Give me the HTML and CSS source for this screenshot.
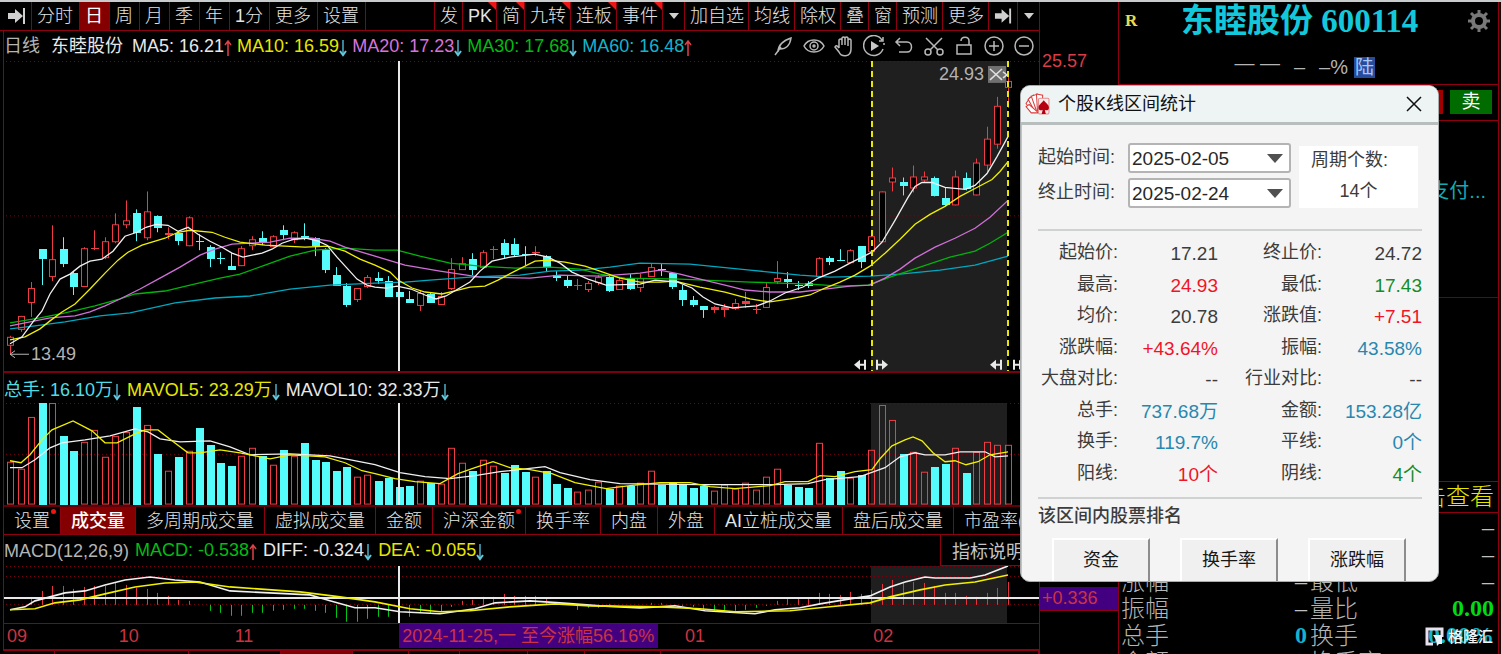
FILE: index.html
```html
<!DOCTYPE html>
<html lang="zh-CN">
<head>
<meta charset="utf-8">
<title>东睦股份 600114</title>
<link rel="stylesheet" href="styles.css">
</head>
<body>
<div class="app">
  <main class="chart-col">
    <nav class="toolbar">
      <div class="tools tools-left">
        <button class="tool" aria-label="展开"><svg class="ico-end" viewBox="0 0 20 18"><path d="M1 6h7V2l8 7-8 7v-4H1zM16 1h2v16h-2z"/></svg></button>
        <button class="tool">分时</button><button class="tool active">日</button><button class="tool">周</button><button class="tool">月</button><button class="tool">季</button><button class="tool">年</button><button class="tool">1分</button><button class="tool">更多</button><button class="tool">设置</button>
      </div>
      <div class="tools tools-right">
        <button class="tool">发</button><button class="tool flag">PK</button><button class="tool flag">简</button><button class="tool flag">九转</button><button class="tool flag">连板</button><button class="tool flag">事件</button><button class="tool caret" aria-label="事件菜单"></button><button class="tool">加自选</button><button class="tool">均线</button><button class="tool">除权</button><button class="tool">叠</button><button class="tool">窗</button><button class="tool">预测</button><button class="tool">更多</button><button class="tool" aria-label="收起"><svg class="ico-end" viewBox="0 0 20 18"><path d="M1 6h7V2l8 7-8 7v-4H1zM16 1h2v16h-2z"/></svg></button><button class="tool caret" aria-label="更多菜单"></button>
      </div>
    </nav>

    <div class="panes">
      <div class="info">
        <span class="gray">日线</span><span class="white name">东睦股份</span>
        <span class="white">MA5: 16.21<svg class="arr up"><use href="#up"/></svg></span>
        <span class="yellow">MA10: 16.59<svg class="arr down"><use href="#down"/></svg></span>
        <span class="magenta">MA20: 17.23<svg class="arr down"><use href="#down"/></svg></span>
        <span class="green">MA30: 17.68<svg class="arr down"><use href="#down"/></svg></span>
        <span class="cyan">MA60: 16.48<svg class="arr up"><use href="#up"/></svg></span>
        <div class="draw">
          <button aria-label="画线"><svg viewBox="0 0 22 22"><path d="M2 20l6-8M5 17c0-7 4-11 13-14-1 7-4 11-11 11"/></svg></button>
          <button aria-label="显示"><svg viewBox="0 0 22 22"><path d="M1 11c4-8 16-8 20 0-4 8-16 8-20 0z"/><circle cx="11" cy="11" r="4"/><circle cx="11" cy="11" r="1"/></svg></button>
          <button aria-label="拖动"><svg viewBox="0 0 22 22"><path d="M6 13V5q1.500-2 3 0v5V3q1.500-2 3 0v7V3q1.500-2 3 0v8V5q2-2 3 0v9c0 9-10 8-12 3L2 12q1-3 4 1"/></svg></button>
          <button aria-label="回放"><svg viewBox="0 0 22 22"><path d="M19 5a10 10 0 1 0 1 9M20 2v4h-4M21 8v2"/><path class="solid" d="M8 6l8 5-8 5z"/></svg></button>
          <button aria-label="撤销"><svg viewBox="0 0 22 22"><path d="M7 3L3 7l4 4M3 7h11c6 0 6 10 0 10H6"/></svg></button>
          <button aria-label="剪切"><svg viewBox="0 0 22 22"><path d="M3 3l12 12M19 3L7 15"/><circle cx="5" cy="17" r="3"/><circle cx="17" cy="17" r="3"/></svg></button>
          <button aria-label="解锁"><svg viewBox="0 0 22 22"><path d="M4 10h14v9H4zM8 6c0-5 8-5 8 0v4"/></svg></button>
          <button aria-label="放大"><svg viewBox="0 0 22 22"><circle cx="11" cy="11" r="9"/><path d="M6 11h10M11 6v10"/></svg></button>
          <button aria-label="缩小"><svg viewBox="0 0 22 22"><circle cx="11" cy="11" r="9"/><path d="M6 11h10"/></svg></button>
        </div>
      </div>
      <svg id="price" class="plot price" viewBox="4 61 1035 311" preserveAspectRatio="none"></svg>

      <div class="info vol-info">
        <span class="aqua">总手: 16.10万<svg class="arr down"><use href="#down"/></svg></span>
        <span class="yellow">MAVOL5: 23.29万<svg class="arr down"><use href="#down"/></svg></span>
        <span class="white">MAVOL10: 32.33万<svg class="arr down"><use href="#down"/></svg></span>
      </div>
      <svg id="volume" class="plot volume" viewBox="4 403 1035 103" preserveAspectRatio="none"></svg>

      <nav class="tabs">
        <button class="dot">设置</button><button class="active">成交量</button><button>多周期成交量</button><button>虚拟成交量</button><button>金额</button><button class="dot">沪深金额</button><button>换手率</button><button>内盘</button><button>外盘</button><button>AI立桩成交量</button><button>盘后成交量</button><button>市盈率(动)</button>
      </nav>

      <div class="info macd-info">
        <span class="gray">MACD(12,26,9)</span>
        <span class="green">MACD: -0.538<svg class="arr up"><use href="#up"/></svg></span>
        <span class="white">DIFF: -0.324<svg class="arr down"><use href="#down"/></svg></span>
        <span class="yellow">DEA: -0.055<svg class="arr down"><use href="#down"/></svg></span>
        <button class="explain">指标说明</button>
      </div>
      <svg id="macd" class="plot macd" viewBox="4 567 1035 57" preserveAspectRatio="none"></svg>

      <div class="axis">
        <span style="left:0%">09</span><span style="left:10.8%">10</span><span style="left:22%">11</span>
        <span class="cursor-date" style="left:38.2%">2024-11-25,一 至今涨幅56.16%</span>
        <span style="left:65.500%">01</span><span style="left:83.700%">02</span>
      </div>
    </div>
    <div class="next-tabs"><button>设置</button><i></i><i></i><i class="on"></i><i></i><i></i><i></i><i></i><i></i><i></i></div>
  </main>

  <aside class="scale">
    <span class="top-price">25.57</span>
    <span class="cursor-value">+0.336</span>
  </aside>

  <section class="quote">
    <header>
      <b class="tag">R</b>
      <h1>东睦股份 600114</h1>
      <button class="gear" aria-label="设置"><svg viewBox="0 0 22 22"><circle cx="11" cy="11" r="6" class="ring"/><path d="M11 0v5M11 17v5M0 11h5M17 11h5M3 3l4 4M15 15l4 4M19 3l-4 4M3 19l4-4" class="teeth"/></svg></button>
    </header>
    <div class="last"><span class="hi">— —</span><span>–</span><span>–%</span><mark>陆</mark></div>
    <div class="trade"><button class="buy">买</button><button class="sell">卖</button></div>
    <div class="news"><a href="#">支付...</a></div>
    <div class="blank"></div>
    <div class="view"><a href="#">点击查看</a></div>
    <dl class="figures">
      <dt></dt><dd></dd><dt></dt><dd>–</dd>
      <dt></dt><dd></dd><dt></dt><dd>–</dd>
      <dt>涨幅</dt><dd>–</dd><dt>最低</dt><dd>–</dd>
      <dt>振幅</dt><dd>–</dd><dt>量比</dt><dd class="lime">0.00</dd>
      <dt>总手</dt><dd class="sky">0</dd><dt>换手</dt><dd class="sky">0.00%</dd>
      <dt>金额</dt><dd></dd><dt>换手率</dt><dd></dd>
    </dl>
    <div class="brand"><svg viewBox="0 0 20 20"><path d="M8 17H2V2h15v8" class="b1"/><path d="M8 8h9v9h-3l-2 2-1-6z" class="b2"/></svg>格隆汇</div>
  </section>
  <div class="edge"></div>
</div>

<div class="dialog" role="dialog" aria-labelledby="dlg-title">
  <header>
    <svg class="cards" viewBox="0 0 24 21"><g class="fan"><path d="M1 10l4-6 8 12-6 2z"/><path d="M3 6l5-4 6 14-5 1z"/><path d="M6 3l6-2 3 15-4 1z"/><path d="M11 1l6 1-1 14-4 1z"/><path d="M1 13l3-2 9 8H6z"/></g><rect x="13" y="5" width="10" height="15" rx="1" class="face"/><path d="M18 7c2 3 5 4 5 7 0 3-3 3-4 2l1 4h-4l1-4c-1 1-4 1-4-2 0-3 3-4 5-7z" class="spade"/></svg>
    <h2 id="dlg-title">个股K线区间统计</h2>
    <button class="close" aria-label="关闭"><svg viewBox="0 0 16 16"><path d="M1 1l14 14M15 1L1 15"/></svg></button>
  </header>
  <div class="body">
    <div class="period">
      <div class="dates">
        <label for="from">起始时间:</label><div class="pick"><select id="from"><option>2025-02-05</option></select></div>
        <label for="to">终止时间:</label><div class="pick"><select id="to"><option>2025-02-24</option></select></div>
      </div>
      <div class="count"><span>周期个数:</span><b>14个</b></div>
    </div>
    <dl class="stats">
      <dt>起始价:</dt><dd>17.21</dd><dt>终止价:</dt><dd>24.72</dd>
      <dt>最高:</dt><dd class="up">24.93</dd><dt>最低:</dt><dd class="down">17.43</dd>
      <dt>均价:</dt><dd>20.78</dd><dt>涨跌值:</dt><dd class="up">+7.51</dd>
      <dt>涨跌幅:</dt><dd class="up">+43.64%</dd><dt>振幅:</dt><dd class="blue">43.58%</dd>
      <dt>大盘对比:</dt><dd>--</dd><dt>行业对比:</dt><dd>--</dd>
      <dt>总手:</dt><dd class="blue">737.68万</dd><dt>金额:</dt><dd class="blue">153.28亿</dd>
      <dt>换手:</dt><dd class="blue">119.7%</dd><dt>平线:</dt><dd class="blue">0个</dd>
      <dt>阳线:</dt><dd class="up">10个</dd><dt>阴线:</dt><dd class="down">4个</dd>
    </dl>
    <h3>该区间内股票排名</h3>
    <div class="rank"><button>资金</button><button>换手率</button><button>涨跌幅</button></div>
  </div>
</div>

<svg class="defs" aria-hidden="true">
  <symbol id="up" viewBox="0 0 8 18"><path d="M4 17V2M1 6l3-4 3 4" fill="none" stroke="#e04048" stroke-width="1.500"/></symbol>
  <symbol id="down" viewBox="0 0 8 18"><path d="M4 1v14" stroke="#3a8296" stroke-width="2"/><path d="M1 12l3 4 3-4" fill="none" stroke="#64c8dc" stroke-width="2"/></symbol>
</svg>
<script src="chart.js"></script>
</body>
</html>
```

FILE: styles.css
```css
* { box-sizing: border-box; }
:root { --line: #8c0012; --sans: "Liberation Sans", "Noto Sans CJK SC", sans-serif; }
body { margin: 0; background: #000; font-family: var(--sans); color: #c4c4c4; overflow: hidden; }
button { font: inherit; color: inherit; background: none; border: 0; padding: 0; }
a { text-decoration: none; color: inherit; }
.defs { position: absolute; width: 0; height: 0; }

.app { display: grid; grid-template-columns: 1fr 79px 379px 3px; height: 100vh; min-height: 600px; border-top: 2px solid #c9cccc; }
.chart-col { display: flex; flex-direction: column; min-width: 0; min-height: 0; border-right: 1px solid var(--line); }

.toolbar { display: flex; justify-content: space-between; height: 29px; flex: none; border-bottom: 1px solid var(--line); font-size: 18px; line-height: 26px; font-weight: 300; color: #e4e4e4; }
.tools { display: flex; }
.tool { position: relative; padding: 0 4px 0 5px; border-left: 1px solid var(--line); white-space: nowrap; }
.tools-left .tool { padding: 0 6px 0 5px; }
.tools-left { border-right: 1px solid var(--line); }
.tools-left .tool:first-child { border-left: 0; padding: 0 4px 0 7px; }
.tool.active { background: #840000; color: #fff; font-weight: 400; }
.flag::after { content: ""; position: absolute; top: 0; right: 0; border: 4px solid; border-color: #f01414 #f01414 transparent transparent; }
.caret { width: 22px; display: flex; align-items: center; justify-content: center; }
.caret::before { content: ""; border: 5px solid transparent; border-top: 6px solid #d0d0d0; border-bottom: 0; }
.ico-end { width: 20px; height: 18px; display: block; fill: #d0d0d0; }
.tools-right .ico-end { width: 19px; }

.panes { flex: 1; min-height: 0; display: flex; flex-direction: column; margin-left: 3px; border-left: 1px solid var(--line); }
.info { display: flex; align-items: center; flex: none; height: 30px; font-size: 18px; gap: 5px; white-space: nowrap; }
.info .gray { color: #b4b4b4; }
.info .name { margin: 0 4px 0 6px; }
.info .gray, .name { line-height: 24px; }
.vol-info, .macd-info { gap: 6px; }
.macd-info { height: 31px; }
.white { color: #e8e8e8; } .yellow { color: #e6e600; } .magenta { color: #d873dc; } .green { color: #00bc14; } .cyan { color: #14b4cd; } .aqua { color: #50dce6; }
.arr { width: 8px; height: 18px; vertical-align: -5px; }
.draw { margin-left: auto; margin-right: 4px; display: flex; gap: 8px; }
.draw svg { display: block; width: 22px; height: 22px; fill: none; stroke: #b8b8b8; stroke-width: 1.5; }
.draw .solid { fill: #c8c8c8; stroke: none; }
.plot { display: block; width: 100%; height: 0; min-height: 0; }
.price { flex: 311; box-sizing: content-box; border-bottom: 2px solid #780010; }
.volume { flex: 103; }
.macd { flex: 57; }

.tabs { display: flex; flex: none; height: 30px; overflow: hidden; border-top: 2px solid #600008; border-bottom: 1px solid var(--line); font-size: 18px; line-height: 26px; font-weight: 300; color: #e4e4e4; white-space: nowrap; }
.tabs button { position: relative; flex: none; padding: 0 10px; border-right: 1px solid var(--line); }
.tabs .active { background: #840000; color: #fff; font-weight: 500; }
.dot::after { content: ""; position: absolute; top: 2px; right: 4px; width: 5px; height: 5px; border-radius: 50%; background: #f01414; }
.explain { margin-left: auto; align-self: stretch; width: 99px; padding-left: 11px; text-align: left; border-left: 1px solid var(--line); border-bottom: 1px solid var(--line); }

.axis { position: relative; flex: none; height: 26px; border-top: 1px solid var(--line); font-size: 18px; line-height: 24px; color: #cc3340; }
.axis span { position: absolute; top: 0; padding-left: 2px; white-space: nowrap; border-left: 1px solid transparent; }
.axis .cursor-date { background: #420080; padding-right: 4px; }
.next-tabs { display: grid; grid-template-columns: 52fr 134fr 92fr 72fr 56fr 51fr 67fr 57fr 76fr 378fr; flex: none; height: 5px; overflow: hidden; border-top: 2px solid var(--line); margin-left: 3px; font-size: 18px; line-height: 24px; }
.next-tabs button, .next-tabs i { border-right: 1px solid var(--line); height: 24px; }
.next-tabs .on { background: #840000; }

.scale { border-right: 1px solid var(--line); display: flex; flex-direction: column; font-size: 18px; color: #dc3c46; }
.top-price { margin: 49px 0 auto 2px; }
.cursor-value { background: #420080; color: #cc3340; line-height: 23px; padding-left: 2px; border-bottom: 1px solid var(--line); margin-bottom: 43px; }

.quote { position: relative; display: flex; flex-direction: column; min-height: 0; overflow: hidden; }
.quote header { display: flex; align-items: center; height: 38px; padding: 0 8px 0 6px; }
.tag { color: #e6dc50; font: bold 17px "Liberation Serif", serif; }
.quote h1 { flex: 1; margin: 0 6px 0 0; text-align: center; color: #14c8dc; font: 600 33px/38px "Liberation Serif", "Noto Sans CJK SC", serif; }
.gear { width: 22px; height: 22px; }
.gear svg { display: block; fill: none; stroke: #787878; }
.ring { stroke-width: 4; } .teeth { stroke-width: 3; }
.last { display: flex; align-items: center; justify-content: flex-end; gap: 14px; height: 45px; padding: 10px 123px 0 0; font-size: 20px; color: #b4b4b4; border-bottom: 1px solid var(--line); }
.last .hi { padding-bottom: 8px; }
.last mark { margin-left: -8px; background: #284c9c; color: #a8c8f8; font-size: 19px; line-height: 21px; width: 21px; text-align: center; }
.trade { display: flex; justify-content: flex-end; gap: 7px; padding: 5px 6px 6px; border-bottom: 1px solid var(--line); color: #fff; font-size: 19px; line-height: 24px; }
.trade button { width: 42px; }
.buy { background: #a00000; } .sell { background: #006c00; }
.news { flex: none; height: 177px; padding: 56px 12px 0 0; text-align: right; font-size: 20px; line-height: 28px; color: #14aab4; border-bottom: 1px solid #6e0010; }
.blank { flex: 1; }
.view { padding-right: 4px; text-align: right; font-size: 24px; line-height: 30px; color: #e6e600; border-top: 1px solid var(--line); border-bottom: 1px solid var(--line); font-weight: 300; }
.figures { flex: none; display: grid; grid-template-columns: 72px 114px 80px 1fr; grid-auto-rows: 27px; height: 141px; overflow: hidden; margin: 0; padding: 1px 4px 0 2px; font-size: 24px; line-height: 27px; font-weight: 300; color: #b4b4b4; }
.figures dt { white-space: nowrap; }
.figures dd { margin: 0; text-align: right; font-family: "Liberation Serif", serif; color: #c0c0c0; }
.figures dt:nth-of-type(even) { padding-left: 3px; }
.figures .lime { color: #00dc14; font-weight: bold; }
.figures .sky { color: #14b4cd; font-weight: bold; }
.brand { position: absolute; right: 5px; bottom: 6px; display: flex; align-items: center; gap: 3px; font-size: 15px; line-height: 22px; font-weight: 500; color: #f4f4f4; }
.brand svg { width: 20px; height: 20px; }
.b1 { fill: none; stroke: #e8e0ec; stroke-width: 3; } .b2 { fill: #e8f4fa; }
.edge { border-left: 1px solid var(--line); background: #180000; }

.dialog { position: absolute; top: 85px; right: 62px; width: 419px; overflow: hidden; background: #f4f4f4; border-radius: 10px; border: 1px solid #a8acac; color: #3c3c3c; font-size: 18px; }
.dialog header { display: flex; align-items: center; height: 39px; padding: 0 16px 0 4px; background: #eef3f3; border-bottom: 3px solid #b8bdbd; }
.cards { width: 25px; height: 22px; }
.fan path { fill: #fff; stroke: #dc3c3c; stroke-width: 1; }
.face { fill: #fde8e8; stroke: #e09090; stroke-width: 1; } .spade { fill: #b40010; }
.dialog h2 { flex: 1; margin: 0 0 0 8px; font-size: 18px; line-height: 26px; font-weight: 400; color: #101010; }
.close svg { display: block; width: 16px; height: 16px; stroke: #101010; stroke-width: 1.5; }
.body { padding: 18px 16px 0 16px; border-left: 1px solid #c0c4c4; }
.period { display: flex; justify-content: space-between; padding-bottom: 21px; border-bottom: 2px solid #d0d2d2; }
.dates { display: grid; grid-template-columns: 90px 163px; row-gap: 5px; line-height: 28px; }
.pick { position: relative; }
.pick select { width: 100%; height: 30px; padding: 0 2px; appearance: none; background: #fff; border: 2px solid #b4b4b4; border-radius: 3px; font: 19px var(--sans); color: #282828; }
.pick::after { content: ""; position: absolute; right: 8px; top: 11px; border: 8px solid transparent; border-top: 9px solid #505050; border-bottom: 0; pointer-events: none; }
.count { display: grid; margin: 3px 4px 0 0; padding: 1px 12px 0; width: 119px; height: 62px; background: #fff; line-height: 27px; white-space: nowrap; }
.count b { font-weight: 400; text-align: center; }
.stats { display: grid; grid-template-columns: 80px 1fr 104px 1fr; grid-auto-rows: 1fr; height: 268px; margin: 0; padding: 6px 0 8px; border-bottom: 2px solid #d0d2d2; line-height: 30px; }
.stats dt { text-align: right; white-space: nowrap; }
.stats dd { margin: 0; text-align: right; font-size: 19px; line-height: 26px; padding-top: 4px; }
.stats .up { color: #f01428; } .stats .down { color: #148c28; } .stats .blue { color: #2887af; }
.dialog h3 { margin: 3px 0 8px; font-size: 18px; line-height: 28px; font-weight: 500; }
.rank { display: flex; gap: 30px; padding-left: 14px; }
.rank button { width: 98px; height: 43px; padding-bottom: 5px; color: #181818; background: #f0f0f0; border: 2px solid #fff; border-right-color: #8c8c8c; border-bottom: 0; }
```

FILE: chart.js
```js
const STEP = 10.5, X0 = 10.5;
const RED = '#f03c44', CYAN = '#54fcfc', GRID = '#800012';
const x = i => X0 + i * STEP;

// [direction, high, body top, body bottom, low, volume top]
const bars = `r 337 338 346 355 462|r 317 317 330 333 469|r 283 289 303 318 417|c 250 250 260 286 403|r 226 260 277 282 403|c 238 250 265 268 436|c 272 274 288 296 451|r 248 249 287 287 442|r 231 249 250 251 430|r 238 242 258 260 457|r 214 225 242 244 436|r 201 221 225 229 432|c 210 214 234 242 407|r 192 212 238 241 425|c 216 217 229 233 454|r 228 234 235 240 471|c 232 234 242 246 457|r 217 218 246 247 451|c 235 242 243 251 428|c 246 248 260 268 445|c 253 259 260 265 463|c 254 267 271 271 466|r 247 249 266 267 456|r 237 240 246 251 448|c 232 239 244 246 456|r 236 237 247 248 465|c 226 231 236 241 450|r 232 233 240 244 456|c 224 238 240 241 443|c 238 239 247 257 460|c 249 251 271 274 462|c 268 276 287 287 471|c 284 287 306 308 467|r 289 289 300 303 477|r 276 278 287 289 475|c 273 280 282 285 481|c 277 282 298 298 478|c 290 293 298 305 487|c 292 300 304 304 486|r 291 294 306 312 481|c 294 295 304 304 483|r 293 297 305 306 484|r 259 270 289 291 448|r 258 264 270 270 463|c 254 260 271 276 471|r 251 253 268 268 460|r 247 250 251 260 466|c 240 244 256 259 473|c 239 245 256 257 465|c 247 255 256 266 472|r 247 253 254 257 477|c 256 257 268 273 471|c 272 276 279 282 484|c 276 281 287 289 488|r 280 286 287 291 492|r 282 284 290 293 490|r 276 278 283 286 482|c 276 278 292 293 489|r 279 281 290 291 486|c 275 279 290 291 486|r 275 279 288 293 483|r 264 268 277 278 471|c 264 270 271 277 485|c 273 274 288 290 483|c 286 291 301 307 485|c 297 301 306 308 488|c 307 307 311 319 486|r 307 309 311 314 491|r 305 309 311 318 485|r 300 304 309 311 489|r 293 303 305 309 483|r 305 310 311 315 490|r 284 288 308 309 477|r 262 279 282 285 469|c 273 280 283 289 485|c 282 286 287 291 487|c 282 285 287 289 488|r 258 259 277 277 443|c 257 259 263 266 478|c 250 261 262 262 471|r 250 251 263 263 478|c 247 247 263 269 475|r 236 237 252 253 450|r 192 192 242 242 405|r 168 178 182 192 420|c 178 183 187 196 454|r 166 177 188 193 452|r 172 177 180 183 472|c 177 179 197 197 467|c 188 199 206 207 464|r 171 177 205 206 448|c 173 179 190 191 473|r 159 163 195 196 452|r 127 139 165 173 442|r 97 106 144 149 445|r 75 81 87 108 445`
  .split('|').map(s => s.split(' ').map((v, k) => k ? +v : v));

const hist = [606,606,600,592,587,587,590,588,587,587,584,586,589,590,594,597,601,602,606,612,614,617,617,614,614,612,611,610,610,612,614,619,623,623,620,618,618,620,618,614,614,613,608,602,601,598,598,595,597,597,597,599,605,606,611,609,609,605,606,606,606,604,604,606,607,608,612,612,612,612,611,609,607,602,599,599,599,594,595,596,593,595,591,585,581,583,583,584,587,594,594,597,598,594,589,583];

const lines = {
  ma60: ['#00a8c0', '10,330 35,327 65,323 100,317 130,314 175,304 215,299 250,297 290,290 330,286 375,284 405,283 430,281 470,278 520,276 550,272 580,271 610,268 640,264 690,265 750,271 800,276 830,278 870,277 900,275 940,271 975,266 1008,257'],
  ma30: ['#00b40a', '10,324 40,319 65,314 95,307 120,300 135,295 165,292 190,286 220,279 240,275 265,266 290,257 315,251 345,249 375,251 397,251 420,257 450,264 480,267 515,269 550,268 580,270 600,275 625,279 680,280 750,283 780,284 810,285 840,287 868,286 890,278 920,268 950,258 975,252 990,244 1008,233'],
  ma20: ['#d070d8', '10,327 30,323 50,319 75,317 90,313 105,307 120,300 140,290 160,279 180,268 200,256 215,250 232,245 250,244 270,243 290,239 312,239 330,242 345,248 375,257 405,266 440,272 480,278 530,279 560,276 600,277 640,274 660,271 680,275 700,280 725,286 745,291 770,293 800,293 825,290 850,287 870,286 885,279 900,270 915,259 935,248 955,239 975,229 990,218 1008,201'],
  ma10: ['#f0f000', '10,341 25,338 40,330 50,322 62,313 75,305 90,290 105,274 118,261 128,253 142,246 165,239 178,233 190,231 212,233 225,238 240,243 265,246 305,248 328,247 345,252 360,260 375,266 390,273 398,281 412,289 425,293 442,295 458,291 470,288 485,287 498,281 515,272 535,262 548,261 565,263 585,267 600,272 620,279 640,283 660,283 675,282 700,288 725,293 750,300 770,303 790,300 810,296 825,289 840,283 855,276 870,267 885,254 900,240 915,225 930,215 945,207 960,197 975,189 992,180 1000,172 1008,162'],
  ma5: ['#f0f0f0', '10,345 22,338 33,323 42,312 50,295 60,280 70,275 80,267 90,262 102,260 113,252 125,237 137,233 146,228 156,225 168,226 178,232 188,228 198,235 210,242 222,248 232,254 243,258 252,256 262,254 272,250 282,244 294,240 306,239 318,242 327,246 337,258 347,269 357,280 367,286 375,288 386,289 397,287 411,290 425,296 436,300 446,297 458,290 470,283 480,272 492,262 510,258 535,255 548,258 560,264 572,273 588,280 606,286 640,285 655,281 678,283 692,289 703,298 715,305 732,309 757,307 770,302 785,294 803,288 818,279 835,272 850,264 862,258 872,253 882,243 895,221 908,198 915,187 922,183 932,183 945,188 965,190 975,186 987,174 997,157 1008,137'],
  vol5: ['#f0f000', '10,461 21,463 30,455 42,440 52,430 73,421 92,431 105,443 117,443 135,434 145,430 158,430 172,441 188,453 200,453 220,450 240,453 270,459 290,455 325,457 345,463 362,471 375,474 395,479 415,482 440,484 458,474 475,468 493,462 510,468 530,470 552,474 575,483 606,489 630,486 660,483 690,483 710,487 735,489 770,486 785,482 808,482 820,476 835,477 855,472 872,470 880,459 892,446 905,440 913,437 922,441 933,453 945,462 955,461 966,465 978,462 990,455 1008,452'],
  vol10: ['#f0f0f0', '10,468 22,468 35,460 50,448 62,443 85,440 110,436 135,429 148,432 160,439 180,442 210,441 230,447 250,455 290,454 330,456 375,465 400,473 425,477 450,479 475,476 500,472 545,467 560,473 590,480 620,484 700,485 775,485 808,484 825,480 860,477 885,468 900,457 915,453 925,455 945,455 960,452 985,452 995,457 1008,456'],
  diff: ['#f0f0f0', '10,611 25,608 35,602 50,598 65,594 85,592 105,586 125,581 150,578 175,581 200,583 230,592 310,596 330,602 355,609 375,609 400,613 440,615 475,610 495,604 530,602 560,604 600,607 640,609 675,607 705,612 755,615 775,611 800,609 820,605 850,600 870,597 890,588 905,583 925,578 935,579 970,579 985,576 1008,567'],
  dea: ['#f0f000', '10,611 35,610 55,604 80,601 105,595 135,588 165,584 195,583 230,588 300,593 340,598 375,603 410,610 440,613 470,612 510,608 555,605 590,607 660,608 700,610 735,613 790,612 830,608 870,604 890,598 920,591 945,586 975,583 1008,576']
};

const rect = (a, b, w, h, fill, stroke = 'none') => `<rect x="${a}" y="${b}" width="${w}" height="${h}" fill="${fill}" stroke="${stroke}"/>`;
const seg = (a, b, c, d, color, extra = '') => `<path d="M${a} ${b}L${c} ${d}" stroke="${color}" fill="none" ${extra}/>`;
const line = (k, w = 1.3) => `<polyline points="${lines[k][1]}" fill="none" stroke="${lines[k][0]}" stroke-width="${w}"/>`;
const grid = y => seg(6, y, 1039, y, GRID, 'stroke-dasharray="1 3"');
const range = (y, h) => rect(871, y, 136, h, '#1f1f1f');
const crisp = s => `<g shape-rendering="crispEdges">${s}</g>`;
const marker = (a, dir) => `<path transform="translate(${a} 366) scale(${dir} 1)" d="M-6 0l6-5v4h4v2h-4v4zM4-5h2v10h-2z" fill="#e8e8e8"/>`;

function candle([t, hi, top, bot, lo], i) {
  const c = Math.floor(x(i)) + .5, col = t === 'r' ? RED : CYAN;
  const wick = seg(c, hi, c, lo, col);
  if (bot - top < 3) return wick + seg(c - 4, top + .5, c + 4, top + .5, col, `stroke-width="${bot - top + .5}"`);
  return wick + (t === 'r' ? rect(c - 3, top + .5, 6, bot - top, '#000', col) : rect(c - 4, top, 8, bot - top, col));
}
function volume(b, i) {
  const c = Math.floor(x(i)) + .5;
  return b[0] === 'r' ? rect(c - 3, b[5] + .5, 6, 504 - b[5], 'none', RED) : rect(c - 4, b[5], 8, 505 - b[5], CYAN);
}

document.getElementById('price').innerHTML =
  crisp(range(61, 311) + grid(61.5) + grid(216.5) + bars.map(candle).join('')) +
  ['ma60', 'ma30', 'ma20', 'ma10', 'ma5'].map(k => line(k)).join('') +
  crisp(seg(871.5, 61, 871.5, 372, '#e6e600', 'stroke-dasharray="6 4" stroke-width="2"') +
    seg(1007.5, 61, 1007.5, 372, '#e6e600', 'stroke-dasharray="6 4" stroke-width="2"') +
    seg(399, 61, 399, 372, '#e8e8e8', 'stroke-width="2"')) +
  marker(860, 1) + marker(882, -1) + marker(996, 1) + marker(1019, -1) +
  '<text x="939" y="80" font-size="18" fill="#b4b4b4">24.93</text>' +
  rect(988, 66, 18, 17, '#707070') +
  '<path d="M990 69l12 11M1002 69l-12 11M1003 72l4 3-4 3" stroke="#e0e0e0" stroke-width="1.5" fill="none"/>' +
  '<text x="31" y="361" font-size="18" fill="#b4b4b4">13.49</text>' +
  '<path d="M10 355.500H29M15 352l-5 3.500 5 3.500" stroke="#b4b4b4" fill="none"/>';

document.getElementById('volume').innerHTML =
  crisp(range(403, 103) + grid(403.5) + grid(454.5) + bars.map(volume).join('') + seg(399, 403, 399, 506, '#e8e8e8', 'stroke-width="2"')) +
  line('vol10') + line('vol5');

document.getElementById('macd').innerHTML =
  crisp(range(567, 57) + grid(567.5) + grid(577.5) + grid(605.5) +
    hist.map((v, i) => { const c = Math.floor(x(i)) + .5; return seg(c, 606, c, v, v < 606 ? '#e6343c' : '#00c814'); }).join('') +
    seg(4, 599, 1039, 599, '#e8e8e8', 'stroke-width="2"') +
    seg(399, 567, 399, 624, '#e8e8e8', 'stroke-width="2"')) +
  line('diff', 1.6) + line('dea', 1.6);
```
